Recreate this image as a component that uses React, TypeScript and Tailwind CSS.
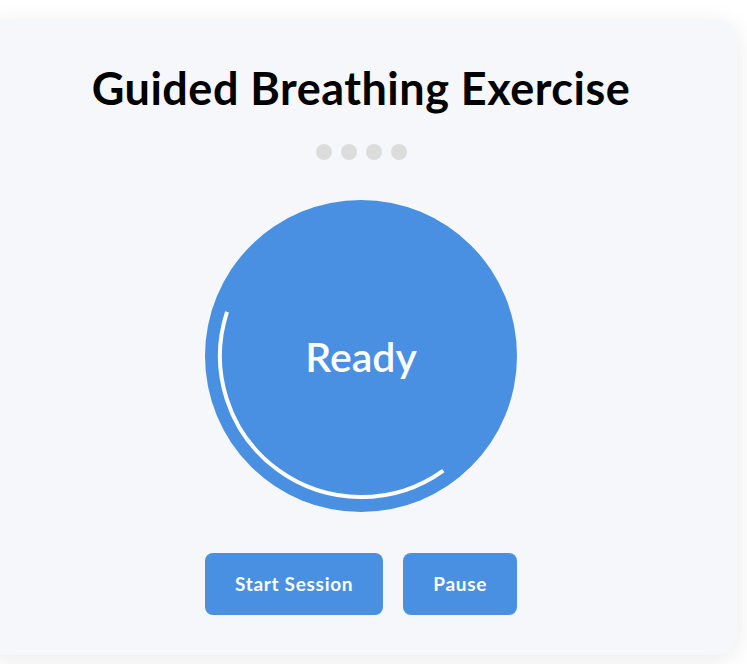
import React from 'react';

const BLUE = '#4a90e2';

function ProgressRing() {
  // arc from ~54deg to ~198deg (clockwise, screen coords), r=141 around the center of a 312 box
  const cx = 156;
  const cy = 156;
  const r = 141;
  const a0 = (54.3 * Math.PI) / 180;
  const a1 = (198.2 * Math.PI) / 180;
  const x0 = cx + r * Math.cos(a0);
  const y0 = cy + r * Math.sin(a0);
  const x1 = cx + r * Math.cos(a1);
  const y1 = cy + r * Math.sin(a1);
  return (
    <svg className="absolute inset-0" width="312" height="312" viewBox="0 0 312 312">
      <path
        d={`M ${x0} ${y0} A ${r} ${r} 0 0 1 ${x1} ${y1}`}
        fill="none"
        stroke="#ffffff"
        strokeWidth="4"
      />
    </svg>
  );
}

export default function App() {
  return (
    <div
      className="min-h-screen bg-white overflow-hidden pt-[20px] pb-[9px]"
      style={{ fontFamily: 'Lato, "Noto Sans", sans-serif' }}
    >
      <div className="w-[752px] -ml-[15px] h-[635px] rounded-[20px] bg-[#f5f7fb] shadow-[0_4px_24px_rgba(0,0,0,0.09)] flex flex-col items-center pt-[42px]">
        <h1 className="text-[45px] leading-[53px] font-bold text-black tracking-[0.5px]">
          Guided Breathing Exercise
        </h1>

        <div className="flex gap-[9px] mt-[29px]">
          {[0, 1, 2, 3].map(i => (
            <span key={i} className="w-[16px] h-[16px] rounded-full bg-[#dcdcdc]" />
          ))}
        </div>

        <div className="relative mt-[40px] w-[312px] h-[312px] rounded-full bg-[#4a90e2] flex items-center justify-center">
          <ProgressRing />
          <span className="relative text-white text-[41px] leading-none font-semibold">Ready</span>
        </div>

        <div className="flex gap-[20px] mt-[41px]">
          <button
            className="h-[62px] px-[30px] rounded-[8px] text-white text-[19px] font-bold tracking-[0.7px]"
            style={{ background: BLUE }}
          >
            Start Session
          </button>
          <button
            className="h-[62px] px-[30px] rounded-[8px] text-white text-[19px] font-bold tracking-[0.7px]"
            style={{ background: BLUE }}
          >
            Pause
          </button>
        </div>
      </div>
    </div>
  );
}
